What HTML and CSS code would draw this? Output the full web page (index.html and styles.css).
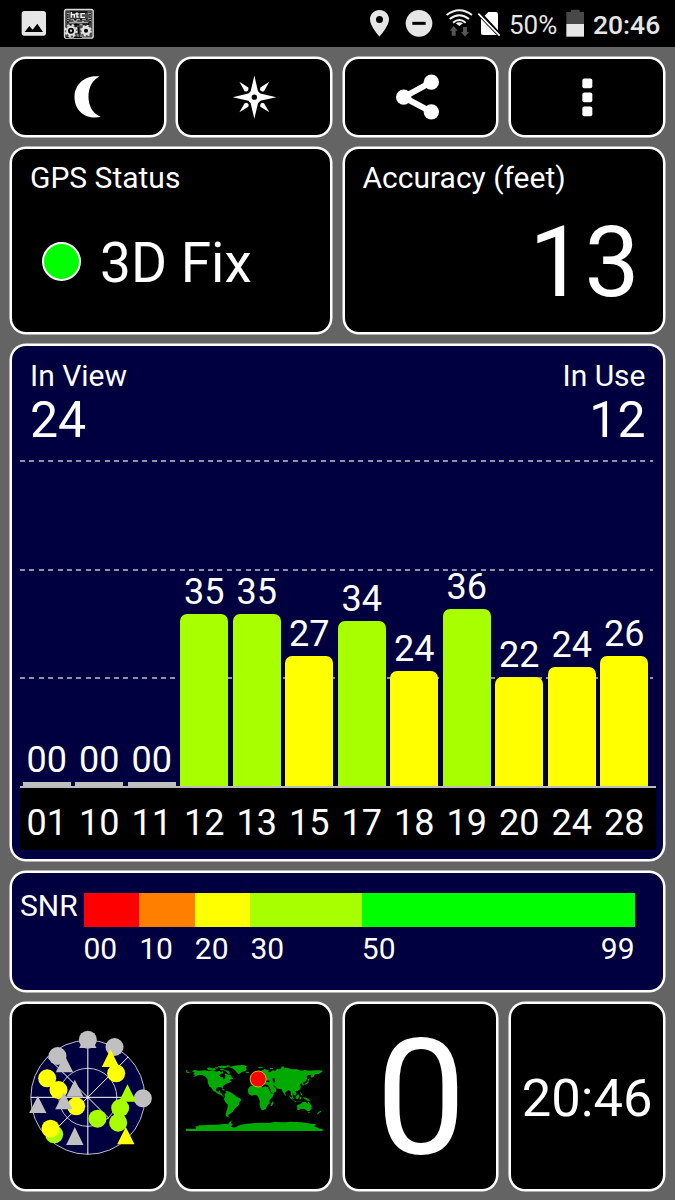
FILE: index.html
```html
<!DOCTYPE html>
<html lang="en">
<head>
    <meta charset="UTF-8">
    <meta name="viewport" content="width=device-width, initial-scale=1.0">
    <title>GPS Status</title>
    <link rel="stylesheet" href="styles.css">
</head>
<body>
    <!-- Status bar -->
    <header class="status-bar">
        <svg class="icon-picture" width="30" height="47" viewBox="57 0 90 141">
            <path fill="#e6e6e6" fill-rule="evenodd" d="M73 33H130Q138 33 138 41V99Q138 107 130 107H73Q65 107 65 99V41Q65 33 73 33ZM74 96H129L112 71L98 89L88 78Z"/>
        </svg>
        <svg class="icon-code" width="32" height="47" viewBox="189 0 96 141">
            <rect x="193.500" y="28.500" width="86" height="86" rx="6" fill="#4a4a4a" stroke="#d8d8d8" stroke-width="4"/>
            <path fill="none" stroke="#000" stroke-width="4" d="M203 38V68M270 38V68M210 36H262M212 58H262M207 74H236M246 72H268M236 82V108M197 112H206M222 112H246M228 68V80"/>
            <g fill="none" stroke="#b8b8b8" stroke-width="3">
                <path d="M201 41H209M201 48H206M201 55H209M201 62H206M264 41H273M268 48H274M264 55H273M268 62H274M208 68H264"/>
                <path stroke="#f0f0f0" stroke-width="4" d="M214 36V53M214 44H223V53M231 37V51H236M226 42H236M255 41H243V52H255"/>
                <path d="M212 59H222V65H230V59H240M246 59H258M246 65H252M240 74H248M234 102V110M240 108H250"/>
            </g>
            <circle cx="213" cy="92" r="17" fill="none" stroke="#e0e0e0" stroke-width="6" stroke-dasharray="7 6.350"/>
            <circle cx="213" cy="92" r="12" fill="#000" stroke="#e0e0e0" stroke-width="6"/>
            <circle cx="213" cy="92" r="3.500" fill="#ccc"/>
            <circle cx="258" cy="92" r="15" fill="none" stroke="#e0e0e0" stroke-width="5" stroke-dasharray="6 5.780"/>
            <circle cx="258" cy="92" r="10" fill="#000" stroke="#e0e0e0" stroke-width="8"/>
        </svg>

        <div class="status-right">
            <svg width="23" height="47" viewBox="99 0 69 141">
                <path fill="#e6e6e6" fill-rule="evenodd" d="M133.500 30C117 30 105 43 105 58C105 79 133.500 110 133.500 110S162 79 162 58C162 43 150 30 133.500 30ZM133.500 48A10.500 10.500 0 1 1 133.500 69A10.500 10.500 0 1 1 133.500 48Z"/>
            </svg>
            <svg class="icon-dnd" width="30" height="47" viewBox="207 0 90 141">
                <circle cx="252" cy="70" r="40" fill="#e6e6e6"/>
                <rect x="232" y="65.500" width="40" height="9" fill="#000"/>
            </svg>
            <svg class="icon-wifi" width="29" height="47" viewBox="330 0 87 141">
                <g fill="none" stroke="#f2f2f2" stroke-width="6">
                    <path d="M335 45Q373 16 411 45"/>
                    <path d="M344 57Q373 34 402 57"/>
                    <path d="M354 68Q373 52 392 68"/>
                </g>
                <path fill="#f2f2f2" d="M362 70Q373 63 384 70L373 78Z"/>
                <path fill="#555" d="M356 78L368 92H362V107H350V92H344ZM390 110L378 96H384V81H396V96H402Z"/>
            </svg>
            <svg class="icon-sim" width="24" height="47" viewBox="426 0 72 141">
                <path fill="#fff" d="M449 47L460 36H482Q489 36 489 43V91ZM438 56L485 105H444Q438 105 438 99Z"/>
                <path d="M430 41L494 107" stroke="#fff" stroke-width="5"/>
            </svg>
            <span class="battery-text">50%</span>
            <svg width="20" height="47" viewBox="690 0 60 141">
                <path fill="#484848" d="M694 36H708V29H734V36H747V73H694Z"/>
                <rect x="694" y="72" width="53" height="38" fill="#e6e6e6"/>
            </svg>
            <span class="clock">20:46</span>
        </div>
    </header>

    <main class="dashboard">
        <!-- Action buttons -->
        <button class="card action">
            <svg width="48" height="48" viewBox="190.500 217.500 144 144">
                <path fill="#fff" d="M297 228C262 223 222 245 222 290C222 334 262 359 301 349C278 341 264 318 264 289C264 260 276 238 297 228Z"/>
            </svg>
        </button>
        <button class="card action">
            <svg width="48" height="48" viewBox="689 217.500 144 144">
                <path fill="#fff" d="M762 225L773 272L780 279L828 290L780 301L773 308L762 355L751 308L744 301L697 290L744 279L751 272Z"/>
                <path fill="#fff" d="M717 244L744 261Q746 270 739 273L733 272ZM807 244L791 272Q782 275 779 268L780 261ZM717 335L733 308Q742 305 745 312L744 319ZM807 335L780 319Q778 310 785 307L791 308Z"/>
                <circle cx="762" cy="290" r="8" fill="#000"/>
            </svg>
        </button>
        <button class="card action">
            <svg width="48" height="48" viewBox="184 217.500 144 144">
                <path d="M290 245L207 290L290 334" fill="none" stroke="#fff" stroke-width="18"/>
                <circle cx="290" cy="245" r="23" fill="#fff"/>
                <circle cx="207" cy="290" r="23" fill="#fff"/>
                <circle cx="290" cy="334" r="23" fill="#fff"/>
            </svg>
        </button>
        <button class="card action">
            <svg width="48" height="48" viewBox="683 217.500 144 144" fill="#fff">
                <rect x="741" y="234" width="30" height="29" rx="6"/>
                <rect x="741" y="276" width="30" height="29" rx="6"/>
                <rect x="741" y="318" width="30" height="29" rx="6"/>
            </svg>
        </button>

        <!-- Fix and accuracy -->
        <section class="card info">
            <h2>GPS Status</h2>
            <div class="fix">
                <span class="fix-light"></span>
                <span class="fix-text">3D Fix</span>
            </div>
        </section>
        <section class="card info">
            <h2>Accuracy (feet)</h2>
            <div class="accuracy">13</div>
        </section>

        <!-- Satellites -->
        <section class="card satellites">
            <div class="totals">
                <div>
                    <div class="total-label">In View</div>
                    <div class="total-value">24</div>
                </div>
                <div class="in-use">
                    <div class="total-label">In Use</div>
                    <div class="total-value">12</div>
                </div>
            </div>
            <div class="plot">
                <div class="column"><span>00</span><div class="bar none" style="height: 4px"></div></div>
                <div class="column"><span>00</span><div class="bar none" style="height: 4px"></div></div>
                <div class="column"><span>00</span><div class="bar none" style="height: 4px"></div></div>
                <div class="column"><span>35</span><div class="bar good" style="height: 172px"></div></div>
                <div class="column"><span>35</span><div class="bar good" style="height: 172px"></div></div>
                <div class="column"><span>27</span><div class="bar fair" style="height: 130.500px"></div></div>
                <div class="column"><span>34</span><div class="bar good" style="height: 165.300px"></div></div>
                <div class="column"><span>24</span><div class="bar fair" style="height: 114.700px"></div></div>
                <div class="column"><span>36</span><div class="bar good" style="height: 177.500px"></div></div>
                <div class="column"><span>22</span><div class="bar fair" style="height: 109px"></div></div>
                <div class="column"><span>24</span><div class="bar fair" style="height: 119.300px"></div></div>
                <div class="column"><span>26</span><div class="bar fair" style="height: 129.700px"></div></div>
            </div>
            <div class="ids">
                <span>01</span><span>10</span><span>11</span><span>12</span>
                <span>13</span><span>15</span><span>17</span><span>18</span>
                <span>19</span><span>20</span><span>24</span><span>28</span>
            </div>
        </section>

        <!-- SNR scale -->
        <section class="card snr">
            <div class="snr-title">SNR</div>
            <div class="scale">
                <div class="step"><i class="red"></i>00</div>
                <div class="step"><i class="orange"></i>10</div>
                <div class="step"><i class="yellow"></i>20</div>
                <div class="step"><i class="lime"></i>30</div>
                <div class="step last"><i class="green"></i><span>50</span><span>99</span></div>
            </div>
        </section>

        <!-- Bottom tiles -->
        <section class="card tile">
            <svg width="133.330" height="140" viewBox="32.500 48 400 420">
                <circle cx="233" cy="259" r="171" fill="#000040" stroke="#c0c0c8" stroke-width="3"/>
                <circle cx="233" cy="259" r="87" fill="none" stroke="#c0c0c8" stroke-width="3"/>
                <path d="M233 88V430M62 259H404M112 138L296 322M354 138L112 380" stroke="#fff" stroke-width="3" fill="none"/>
                <g fill="#c0c0c0">
                    <path d="M233 60L259 111H207Z"/>
                    <circle cx="233" cy="86" r="27"/>
                    <circle cx="313" cy="108" r="27"/>
                    <circle cx="142" cy="135" r="27"/>
                    <circle cx="398" cy="262" r="27"/>
                    <path d="M163 132L189 184H137ZM194 206L220 257H168ZM83 255L109 306H57ZM194 348L220 402H168Z"/>
                </g>
                <g fill="#a8ff00">
                    <path d="M352 220L378 272H326Z"/>
                    <circle cx="330" cy="291" r="27"/>
                    <circle cx="324" cy="335" r="27"/>
                    <circle cx="262" cy="323" r="27"/>
                    <circle cx="132" cy="370" r="27"/>
                </g>
                <g fill="#ff0">
                    <circle cx="111" cy="202" r="27"/>
                    <circle cx="145" cy="237" r="27"/>
                    <circle cx="198" cy="286" r="27"/>
                    <circle cx="121" cy="353" r="27"/>
                    <circle cx="318" cy="187" r="27"/>
                    <path d="M301 115L327 168H275ZM347 348L373 400H321Z"/>
                </g>
                <path d="M161 244L187 295H135Z" fill="#c0c0c0"/>
            </svg>
        </section>
        <section class="card tile">
            <svg width="144" height="70" viewBox="19.500 48 432 210">
                <g fill="#00aa00">
                    <!-- Americas -->
                    <path d="M31 73L36 72L35 77L43 78L42 81L33 80ZM49 76L57 72L70 74L88 73L100 75L113 73L122 77L132 74L136 79L143 76L142 82L136 84L131 88L135 93L142 94L145 101L148 96L146 88L151 82L158 87L164 85L170 95L174 98L167 100L162 103L169 106L160 111L150 114L143 121L141 130L137 124L128 123L122 128L122 134L128 137L133 133L135 135L132 139L139 143L142 149L148 149L144 152L136 147L127 143L120 138L114 135L106 124L103 124L97 111L96 99L90 92L82 88L71 86L64 90L51 93L60 87L52 84L58 80Z"/>
                    <path d="M150 141L157 136L168 140L174 144L183 152L196 158L197 163L191 169L190 177L183 183L176 190L172 197L164 203L160 205L158 211L162 214L154 213L150 207L153 194L156 187L157 176L150 169L145 159L149 151L147 146Z"/>
                    <path d="M138 130L145 129L149 133L143 133ZM149 134L157 135L156 138L150 137Z"/>
                    <!-- Arctic islands -->
                    <path d="M94 67L101 64L109 67L119 67L121 71L113 74L106 72L98 72ZM119 64L128 64L129 67L122 68ZM127 61L140 59L148 60L157 58L166 60L156 63L149 66L139 67L132 65ZM132 69L141 68L150 73L158 74L164 81L160 85L153 78L145 73L137 73Z"/>
                    <path d="M159 63L173 60L187 58L203 57L214 60L211 65L214 69L210 75L199 78L193 83L188 84L183 78L177 71L170 67Z"/>
                    <path d="M209 77L219 77L221 80L214 82ZM248 63L258 62L263 64L255 67L249 66ZM283 66L293 66L291 69L283 69ZM316 63L324 61L327 65L319 67Z"/>
                    <!-- Europe and Asia -->
                    <path d="M226 104L229 95L236 92L240 84L250 78L257 75L267 69L281 73L277 77L285 78L291 73L300 74L304 69L310 70L321 65L337 66L347 70L365 70L376 74L388 72L401 74L418 73L437 73L441 77L435 80L430 84L418 85L414 93L408 95L405 91L408 86L398 87L393 92L395 98L389 107L382 110L386 117L382 119L378 112L373 115L376 122L374 130L365 136L359 135L363 143L360 149L355 147L352 141L352 153L357 162L350 156L347 147L345 136L339 132L331 138L327 147L322 138L318 130L307 128L299 125L303 131L301 137L290 143L285 135L278 124L276 116L264 115L258 109L253 115L247 109L239 108L233 117L225 116Z"/>
                    <path d="M392 111L397 106L396 101L399 98L403 102L399 104L399 110L393 115L387 117L388 113ZM403 94L405 101L402 99ZM229 88L235 85L237 93L229 95ZM224 91L228 90L228 94L223 94Z"/>
                    <!-- Africa -->
                    <path d="M226 119L241 116L250 116L251 121L261 124L269 121L277 124L284 137L289 143L296 142L291 153L282 162L282 173L276 177L271 189L262 193L257 191L252 175L253 165L247 151L240 146L228 149L219 143L217 133L219 126ZM288 171L293 165L294 171L289 181L285 180Z"/>
                    <!-- Indonesia and Australia -->
                    <path d="M340 148L350 156L352 164L345 157ZM351 163L361 165L366 167L359 167ZM360 152L368 145L372 149L367 160L361 158ZM372 153L378 152L376 160L372 161ZM374 135L378 142L381 150L376 146ZM385 154L394 156L405 164L398 165L388 160L382 155ZM328 143L332 147L329 149ZM369 166L377 167L373 169Z"/>
                    <path d="M365 177L375 174L382 168L391 168L395 173L399 166L408 179L409 187L403 195L395 196L389 190L379 188L370 192L365 191ZM397 198L404 198L400 202ZM430 197L438 193L436 198L431 201L426 206L425 203Z"/>
                    <!-- Antarctica -->
                    <path d="M31 248L62 248L60 242L72 238L88 238L101 236L128 236L149 233L158 235L162 228L171 223L166 230L172 236L165 242L177 245L187 240L196 236L215 233L240 231L264 230L281 231L299 227L316 229L331 229L345 227L361 228L379 229L397 232L421 235L417 241L433 248H441V255H31Z"/>
                </g>
                <path fill="#000" d="M140 88L146 84L150 89L148 98L142 94ZM291 98L297 96L299 108L294 110ZM273 103L283 104L280 108L270 107ZM275 118L279 119L287 134L284 133ZM291 116L299 121L303 125L297 124Z"/>
                <circle cx="248" cy="99" r="24" fill="#f00" stroke="#ddb800" stroke-width="3"/>
            </svg>
        </section>
        <section class="card tile speed">0</section>
        <section class="card tile time">20:46</section>
    </main>
</body>
</html>
```

FILE: styles.css
```css
* {
    box-sizing: border-box;
}
body {
    margin: 0;
    background-color: #646464;
    color: #fff;
    font-family: Roboto, sans-serif;
}
svg {
    display: block;
    flex: none;
}

/* Status bar */
.status-bar {
    display: flex;
    align-items: center;
    height: 47px;
    padding: 0 15px 0 19px;
    background-color: #000;
    color: #e6e6e6;
}
.icon-code {
    margin-left: 14px;
}
.status-right {
    display: flex;
    align-items: center;
    margin-left: auto;
}
.icon-dnd {
    margin-left: 13px;
}
.icon-wifi {
    margin-left: 11px;
}
.icon-sim {
    margin-left: 3px;
}
.battery-text {
    width: 56px;
    margin-left: 8px;
    padding-top: 3px;
    font-size: 26px;
    line-height: 30px;
}
.clock {
    width: 67px;
    margin-left: 8px;
    padding-top: 3px;
    font-size: 26.5px;
    font-weight: 500;
    line-height: 30px;
}

/* Grid of cards */
.dashboard {
    display: grid;
    grid-template-columns: repeat(4, 1fr);
    grid-template-rows: 80px 187px 517px 121px 189px;
    gap: 10px 10.5px;
    padding: 10px 10.5px 9px 10px;
}
.card {
    min-width: 0;
    border: 2px solid #fff;
    border-radius: 16px;
    background-color: #000;
    box-shadow: 0 0 0 0.5px #fff;
}
.action {
    display: flex;
    align-items: center;
    justify-content: center;
    padding: 0;
}
.info {
    grid-column: span 2;
    padding: 12px 18px;
}
.info h2 {
    margin: 0;
    font-size: 30px;
    font-weight: 400;
    line-height: 34px;
}
.fix {
    display: flex;
    align-items: center;
    margin-top: 35px;
    padding-left: 12px;
}
.fix-light {
    width: 39px;
    height: 39px;
    border: 2px solid #fff;
    border-radius: 50%;
    background-color: #0f0;
}
.fix-text {
    margin-left: 19px;
    padding-top: 3px;
    font-size: 55px;
    line-height: 60px;
}
.accuracy {
    margin-top: 18px;
    padding-right: 5px;
    font-size: 98px;
    line-height: 100px;
    text-align: right;
}

/* Satellites chart */
.satellites {
    grid-column: span 4;
    padding: 13px 7px 0 8px;
    background-color: #000040;
}
.totals {
    display: flex;
    justify-content: space-between;
    height: 91px;
    padding: 0 10px;
}
.in-use {
    text-align: right;
}
.total-label {
    font-size: 30px;
    line-height: 34px;
}
.total-value {
    font-size: 50px;
    line-height: 54px;
}
.plot {
    display: grid;
    grid-template-columns: repeat(12, 52.5px);
    height: 338px;
    padding-left: 0.5px;
    border-bottom: 2px solid #bbb;
    background-image:
        repeating-linear-gradient(90deg, #9090a8 0 5px, transparent 5px 9.4px),
        repeating-linear-gradient(90deg, #9090a8 0 5px, transparent 5px 9.4px),
        repeating-linear-gradient(90deg, #9090a8 0 5px, transparent 5px 9.4px);
    background-position: 0 10px, 0 119px, 0 227px;
    background-size: 633px 2px;
    background-repeat: no-repeat;
}
.column {
    display: flex;
    flex-direction: column;
    justify-content: flex-end;
    align-items: center;
    font-size: 36px;
    line-height: 44px;
}
.bar {
    width: 48px;
    border-radius: 7px 7px 0 0;
}
.bar.none {
    border-radius: 0;
    background-color: #c0c0c0;
}
.bar.good {
    background-color: #a8ff00;
}
.bar.fair {
    background-color: #ff0;
}
.ids {
    display: grid;
    grid-template-columns: repeat(12, 52.5px);
    height: 62px;
    padding-left: 0.5px;
    background-color: #000;
    font-size: 36px;
    line-height: 71px;
    text-align: center;
}

/* SNR scale */
.snr {
    display: flex;
    grid-column: span 4;
    padding: 20px 28px 0 8px;
    background-color: #000040;
    font-size: 30px;
}
.snr-title {
    width: 63.5px;
    line-height: 26px;
}
.scale {
    display: grid;
    flex: 1;
    grid-template-columns: 10fr 10fr 10fr 20fr 49fr;
    line-height: 43px;
}
.step i {
    display: block;
    height: 34px;
}
.last {
    display: flex;
    flex-wrap: wrap;
    justify-content: space-between;
    align-content: flex-start;
}
.last i {
    width: 100%;
}
.red {
    background-color: #f00;
}
.orange {
    background-color: #ff8000;
}
.yellow {
    background-color: #ff0;
}
.lime {
    background-color: #a8ff00;
}
.green {
    background-color: #0f0;
}

/* Bottom tiles */
.tile {
    display: flex;
    align-items: center;
    justify-content: center;
    overflow: hidden;
}
.speed {
    padding: 3px 0 0 1px;
    font-size: 161px;
}
.time {
    padding: 2px 0 0 1px;
    font-size: 52.5px;
}
```
